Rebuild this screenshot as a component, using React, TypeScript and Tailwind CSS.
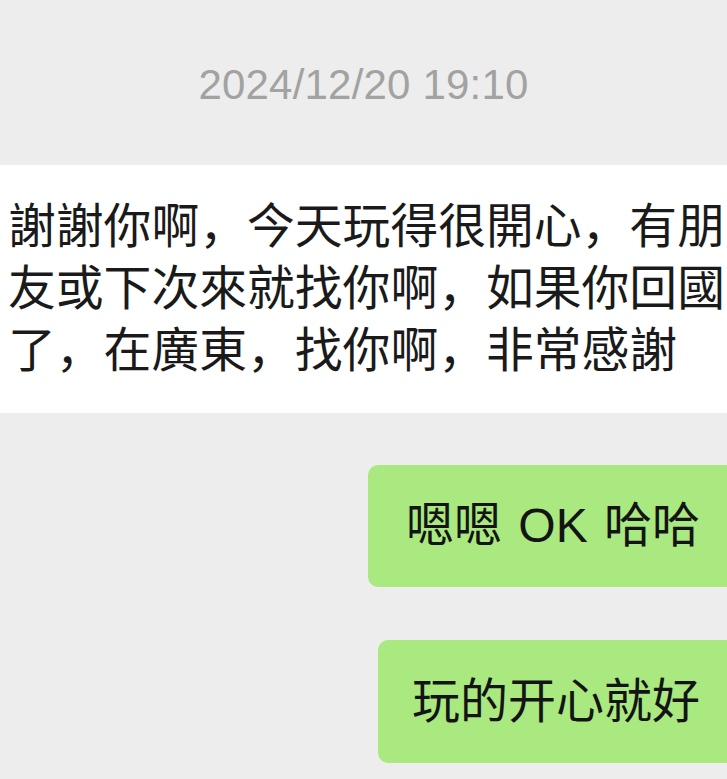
import React from "react";

export default function App() {
  const cjk = { fontFamily: '"Liberation Sans", "Noto Sans CJK SC", sans-serif' };
  return (
    <div className="w-[727px] h-[779px] overflow-hidden bg-[#ededed]" style={cjk}>
      <div className="h-[165px] flex items-center justify-center pt-[5px]">
        <span
          className="text-[42px] leading-none text-[#a2a2a2] tracking-[0.2px]"
          style={{ fontFamily: '"Liberation Sans", sans-serif' }}
        >
          2024/12/20 19:10
        </span>
      </div>
      <div className="h-[248px] bg-white pl-[8px] pt-[31px] text-[47.8px] leading-[62px] text-[#1a1a1a] overflow-hidden">
        <div className="whitespace-nowrap">謝謝你啊，今天玩得很開心，有朋</div>
        <div className="whitespace-nowrap">友或下次來就找你啊，如果你回國</div>
        <div className="whitespace-nowrap">了，在廣東，找你啊，非常感謝</div>
      </div>
      <div className="flex flex-col pt-[52px] gap-[53px]">
        <div className="ml-auto w-[359px] h-[122px] rounded-l-[10px] bg-[#a9e97f] flex items-center pl-[38px]">
          <span className="text-[48px] leading-none text-[#141414] whitespace-nowrap" style={{ wordSpacing: "3px" }}>
            嗯嗯 OK 哈哈
          </span>
        </div>
        <div className="ml-auto w-[349px] h-[123px] rounded-l-[10px] bg-[#a9e97f] flex items-center pl-[34px]">
          <span className="text-[48px] leading-none text-[#141414] whitespace-nowrap">玩的开心就好</span>
        </div>
      </div>
    </div>
  );
}
